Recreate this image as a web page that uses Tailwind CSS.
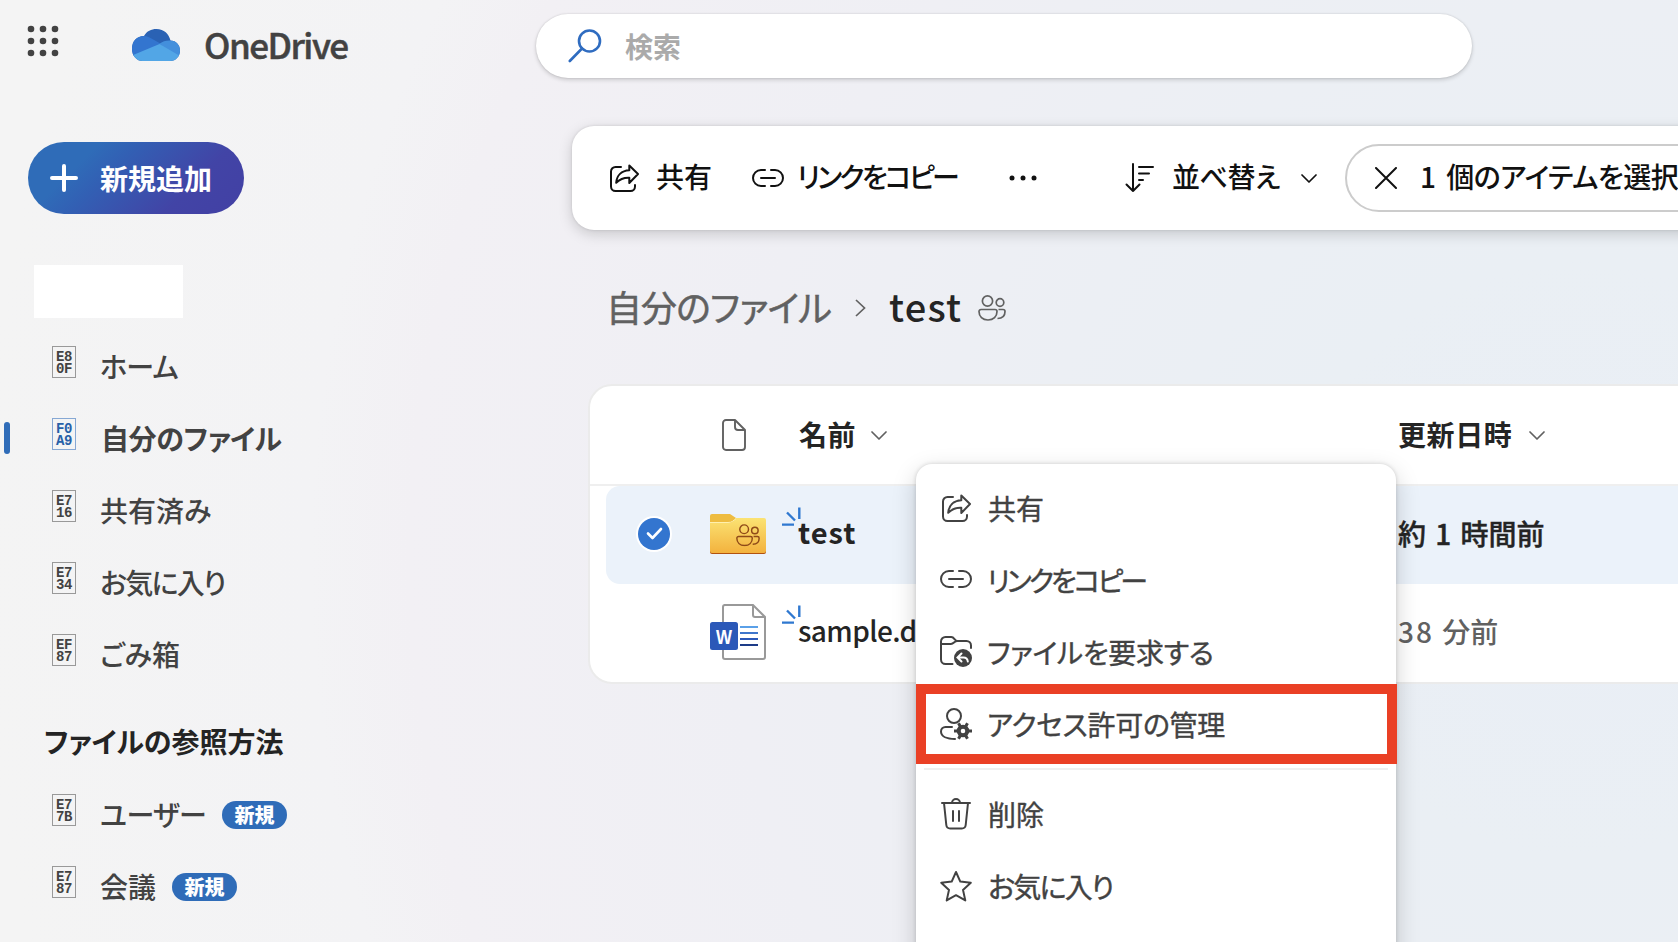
<!DOCTYPE html>
<html lang="ja">
<head>
<meta charset="utf-8">
<title>OneDrive</title>
<script src="https://cdn.jsdelivr.net/npm/@tailwindcss/browser@4"></script>
</head>
<body class="overflow-hidden">
<svg class="hidden">
  <symbol id="share" viewBox="0 0 32 32" fill="none" stroke="currentColor" stroke-width="2" stroke-linecap="round" stroke-linejoin="round"><path d="M13 5H7.500a4.500 4.500 0 0 0-4.500 4.500v15a4.500 4.500 0 0 0 4.500 4.500h15a4.500 4.500 0 0 0 4.500-4.500v-1.500"/><path d="M21.300 3.500 30 12l-8.700 9v-5.200c-6-.3-10 1.900-13.100 5C8.700 13.500 13.500 8.600 21.300 8.200z"/></symbol>
  <symbol id="link" viewBox="0 0 32 32" fill="none" stroke="currentColor" stroke-width="2" stroke-linecap="round"><path d="M13 8H9a8 8 0 0 0 0 16h4M19 8h4a8 8 0 0 1 0 16h-4M9 16h14"/></symbol>
  <symbol id="chev" viewBox="0 0 16 9" fill="none" stroke="currentColor" stroke-width="1.700" stroke-linecap="round" stroke-linejoin="round"><path d="m1 1 7 7 7-7"/></symbol>
  <symbol id="people" viewBox="0 0 28 26" fill="none" stroke="currentColor" stroke-width="1.700"><circle cx="9.500" cy="6" r="5.100"/><circle cx="22" cy="7.500" r="3.800"/><path d="M3 14.500h14a2 2 0 0 1 2 2c0 5-3.500 8.500-9 8.500s-9-3.500-9-8.500a2 2 0 0 1 2-2zM20.500 14.500H25a2 2 0 0 1 2 2c0 4-2.500 7-7.500 7"/></symbol>
  <symbol id="spark" viewBox="0 0 20 20" fill="none" stroke="#2f78d0" stroke-width="2.400"><path d="M17.300.5v11.500M5 5.500l8 8M0 17.600h12"/></symbol>
</svg>
<div class="relative flex h-[942px] w-[1678px] overflow-hidden bg-[radial-gradient(circle_at_1580px_560px,#e9eef6_0px,#eaeff4_300px,#eceff4_550px,#efeff4_850px,#f2f0f4_1170px,#f3f3f5_1270px,#f4f4f4_1600px)] font-['Noto_Sans_CJK_JP',sans-serif] text-[28px] leading-[40px] text-[#424242] [font-feature-settings:'palt']">

  <aside class="flex w-[536px] shrink-0 flex-col">
    <header class="flex h-[88px] items-start pl-[27px]">
      <svg class="mt-[25px] size-8" viewBox="0 0 32 32" fill="#424242"><circle cx="4" cy="4" r="3.300"/><circle cx="16" cy="4" r="3.300"/><circle cx="28" cy="4" r="3.300"/><circle cx="4" cy="16" r="3.300"/><circle cx="16" cy="16" r="3.300"/><circle cx="28" cy="16" r="3.300"/><circle cx="4" cy="28" r="3.300"/><circle cx="16" cy="28" r="3.300"/><circle cx="28" cy="28" r="3.300"/></svg>
      <svg class="mt-[29px] ml-[73px] h-8 w-12" viewBox="0 0 48 32"><defs><clipPath id="cl"><path d="M10.500 32A10.500 12 0 0 1 0 20C0 12 5 7 12 7 15 2 19 0 24.500 0 32 0 37 5 38.500 11.500 44 11.500 48 16 48 21.500S44 32 38 32z"/></clipPath></defs><g clip-path="url(#cl)"><path fill="#2a62b4" d="M0 0h48v32H0z"/><path fill="#3375cf" d="M0 7h12c3 0 5 1 7 2.300L31 16 0 28z"/><path fill="#438fdc" d="M27 15c4-3 8-4 12-3.500h9V30z"/><path fill="#52a6e6" d="M0 26.500 27.500 15 48 27v5H0z"/></g></svg>
      <span class="mt-[21px] ml-[24px] text-[35px] leading-[46px] font-medium tracking-[-1.500px] [-webkit-text-stroke:0.5px]">OneDrive</span>
    </header>
    <button class="mt-[54px] ml-7 flex h-[72px] w-[216px] shrink-0 items-center rounded-full bg-[linear-gradient(135deg,#2f6cb8_0%,#2f6cb8_25%,#3260b4_38%,#4244a6_72%,#4240a4_100%)] pl-[22px] font-bold text-white">
      <svg class="size-7" viewBox="0 0 28 28" stroke="#fff" stroke-width="4" stroke-linecap="round"><path d="M14 2v24M2 14h24"/></svg>
      <span class="ml-[22px]">新規追加</span>
    </button>
    <div class="mt-[51px] ml-[34px] h-[53px] w-[149px] shrink-0 bg-white"></div>
    <nav class="mt-[8px] flex flex-col font-medium">
      <a class="flex h-[72px] items-center pl-[52px]"><span class="flex h-8 w-6 shrink-0 flex-col items-center justify-center border border-[#999] pt-px font-['Liberation_Mono',monospace] text-[14px] leading-[12px] font-bold tracking-[-0.400px]"><span>E8</span><span>0F</span></span><span class="mt-[7px] ml-6 tracking-[-0.7px]">ホーム</span></a>
      <a class="flex h-[72px] items-center pl-1 font-bold"><span class="h-8 w-1.5 translate-y-1 rounded-full bg-[#2f6cb8]"></span><span class="ml-[42px] flex h-8 w-6 shrink-0 flex-col items-center justify-center border border-[#86a8d4] pt-px font-['Liberation_Mono',monospace] text-[14px] leading-[12px] font-bold tracking-[-0.400px] text-[#2860a8]"><span>F0</span><span>A9</span></span><span class="mt-[7px] ml-[25px] tracking-[-0.400px]">自分のファイル</span></a>
      <a class="flex h-[72px] items-center pl-[52px]"><span class="flex h-8 w-6 shrink-0 flex-col items-center justify-center border border-[#999] pt-px font-['Liberation_Mono',monospace] text-[14px] leading-[12px] font-bold tracking-[-0.400px]"><span>E7</span><span>16</span></span><span class="mt-[7px] ml-6">共有済み</span></a>
      <a class="flex h-[72px] items-center pl-[52px]"><span class="flex h-8 w-6 shrink-0 flex-col items-center justify-center border border-[#999] pt-px font-['Liberation_Mono',monospace] text-[14px] leading-[12px] font-bold tracking-[-0.400px]"><span>E7</span><span>34</span></span><span class="mt-[7px] ml-6 tracking-[-1.700px]">お気に入り</span></a>
      <a class="flex h-[72px] items-center pl-[52px]"><span class="flex h-8 w-6 shrink-0 flex-col items-center justify-center border border-[#999] pt-px font-['Liberation_Mono',monospace] text-[14px] leading-[12px] font-bold tracking-[-0.400px]"><span>EF</span><span>87</span></span><span class="mt-[7px] ml-6">ごみ箱</span></a>
      <h2 class="flex h-[88px] items-center pt-[22px] pl-[44px] font-bold text-[#242424]">ファイルの参照方法</h2>
      <a class="flex h-[72px] items-center pl-[52px]"><span class="flex h-8 w-6 shrink-0 flex-col items-center justify-center border border-[#999] pt-px font-['Liberation_Mono',monospace] text-[14px] leading-[12px] font-bold tracking-[-0.400px]"><span>E7</span><span>7B</span></span><span class="mt-[7px] ml-6 tracking-[-0.7px]">ユーザー</span><span class="mt-[10px] ml-4 h-7 w-[65px] rounded-full bg-[#2f6cb8] text-center text-[20px] leading-[27px] font-black text-white">新規</span></a>
      <a class="flex h-[72px] items-center pl-[52px]"><span class="flex h-8 w-6 shrink-0 flex-col items-center justify-center border border-[#999] pt-px font-['Liberation_Mono',monospace] text-[14px] leading-[12px] font-bold tracking-[-0.400px]"><span>E7</span><span>87</span></span><span class="mt-[7px] ml-6">会議</span><span class="mt-[10px] ml-4 h-7 w-[65px] rounded-full bg-[#2f6cb8] text-center text-[20px] leading-[27px] font-black text-white">新規</span></a>
    </nav>
  </aside>

  <main class="flex w-[1142px] shrink-0 flex-col">
    <div class="mt-[14px] flex h-16 w-[936px] shrink-0 items-center rounded-full bg-white pl-8 shadow-[0_2px_4px_rgba(0,0,0,0.16),0_0_2px_rgba(0,0,0,0.14)]">
      <svg class="size-[34px]" viewBox="0 0 34 34" fill="none" stroke="#2f6cc0" stroke-width="2.600" stroke-linecap="round"><circle cx="21.500" cy="12" r="10.500"/><path d="M14 19.500 1.800 32"/></svg>
      <span class="ml-[23px] font-bold text-[#aaa]">検索</span>
    </div>
    <div class="mt-12 ml-9 flex h-[104px] w-[1300px] shrink-0 items-center rounded-[22px] bg-white pl-9 font-medium text-[#111] shadow-[0_4px_14px_rgba(0,0,0,0.17),0_0_3px_rgba(0,0,0,0.12)]">
      <svg class="size-8"><use href="#share"/></svg>
      <span class="-mt-[4px] ml-[16px] w-[96px]">共有</span>
      <svg class="size-8"><use href="#link"/></svg>
      <span class="-mt-[4px] ml-[13px] w-[212px] tracking-[-2.700px]">リンクをコピー</span>
      <svg class="h-2 w-7" viewBox="0 0 28 8" fill="#111"><circle cx="3" cy="4" r="2.500"/><circle cx="14" cy="4" r="2.500"/><circle cx="25" cy="4" r="2.500"/></svg>
      <svg class="ml-[88px] size-[30px]" viewBox="0 0 30 30" fill="none" stroke="#111" stroke-width="2" stroke-linecap="round" stroke-linejoin="round"><path d="M8 1v27M1.500 21.500 8 28l6.500-6.500M14 4h14M14 10.500h10M14 17h4"/></svg>
      <span class="-mt-[4px] ml-[17px] w-[129px] tracking-[-0.5px]">並べ替え</span>
      <svg class="h-[9px] w-4"><use href="#chev"/></svg>
      <div class="ml-7 flex h-[68px] w-[400px] shrink-0 items-center rounded-full border-2 border-[#ccc] pl-7">
        <svg class="size-[22px]" viewBox="0 0 22 22" stroke="#111" stroke-width="2" stroke-linecap="round"><path d="m1 1 20 20M21 1 1 21"/></svg>
        <span class="-mt-[4px] ml-[23px] whitespace-nowrap tracking-[-0.500px] [word-spacing:5px]">1 個のアイテムを選択</span>
      </div>
    </div>
    <div class="mt-[50px] ml-[70px] flex h-14 shrink-0 items-center text-[36px] leading-[52px]">
      <span class="-mt-[5px] tracking-[-0.9px] text-[#616161] [-webkit-text-stroke:0.5px]">自分のファイル</span>
      <svg class="ml-6 h-[18px] w-[11px]" viewBox="0 0 11 18" fill="none" stroke="#616161" stroke-width="1.700"><path d="m1 1 8.500 8L1 17"/></svg>
      <span class="-mt-[5px] ml-[23px] text-[38px] font-medium tracking-[1.200px] text-[#242424]">test</span>
      <svg class="ml-[16px] h-[26px] w-7 text-[#616161]"><use href="#people"/></svg>
    </div>
    <section class="mt-12 ml-[52px] flex h-[300px] w-[1200px] shrink-0 flex-col rounded-[24px] border-2 border-[#ebebeb] bg-white font-medium text-[#242424]">
      <div class="flex h-[100px] shrink-0 items-center border-b-2 border-[#efefef] pl-[132px] font-bold">
        <svg class="h-8 w-6" viewBox="0 0 24 32" fill="none" stroke="#616161" stroke-width="1.900" stroke-linejoin="round"><path d="M4 1h9l10 10v17a3 3 0 0 1-3 3H4a3 3 0 0 1-3-3V4a3 3 0 0 1 3-3z"/><path d="M13 1v7a3 3 0 0 0 3 3h7"/></svg>
        <span class="-mt-[3px] ml-[53px] tracking-[0.5px]">名前</span>
        <svg class="ml-[15px] h-[9px] w-4 text-[#616161]"><use href="#chev"/></svg>
        <span class="-mt-[3px] ml-auto w-[131px] shrink-0 tracking-[0.600px]">更新日時</span>
        <svg class="mr-[241px] h-[9px] w-4 shrink-0 text-[#616161]"><use href="#chev"/></svg>
      </div>
      <div class="ml-4 flex h-[98px] shrink-0 items-center rounded-l-[14px] bg-[#ebf2fa] pb-0.5 pl-7">
        <svg class="size-10" viewBox="0 0 40 40"><circle cx="20" cy="20" r="18" fill="#fff"/><circle cx="20" cy="20" r="16" fill="#3375cf"/><path d="m14 19.500 4.500 4.500L27 15" fill="none" stroke="#fff" stroke-width="2.600" stroke-linecap="round" stroke-linejoin="round"/></svg>
        <svg class="ml-9 h-10 w-14" viewBox="0 0 56 40"><defs><linearGradient id="fg" x2="0" y2="1"><stop stop-color="#fbe373"/><stop offset="1" stop-color="#f3b23e"/></linearGradient></defs><path fill="#eebc40" d="M0 2a2 2 0 0 1 2-2h18l6 4v8H0z"/><path fill="#b2520e" d="M0 30h56v8a2 2 0 0 1-2 2H2a2 2 0 0 1-2-2z"/><path fill="url(#fg)" d="M0 9h18c4 0 5-1 8-5h28a2 2 0 0 1 2 2v31a2 2 0 0 1-2 2H2a2 2 0 0 1-2-2z"/><path d="M0 8.500h18c4 0 5-1.500 8-4" fill="none" stroke="#fff0ae"/><use href="#people" x="26" y="10" width="24" height="22.500" color="#8f4a18"/></svg>
        <svg class="ml-4 size-5 -translate-y-[17px]"><use href="#spark"/></svg>
        <span class="-mt-[6px] -ml-[4px] text-[29px] font-bold tracking-[1px]">test</span>
        <span class="-mt-[3px] ml-auto mr-[237px] w-[151px] shrink-0 whitespace-nowrap [word-spacing:3px] [-webkit-text-stroke:0.400px]">約 1 時間前</span>
      </div>
      <div class="flex h-[98px] shrink-0 items-center pb-0.5 pl-[120px]">
        <svg class="h-14 w-14" viewBox="0 0 56 56"><path d="M14 1h29l12 12v40a2 2 0 0 1-2 2H15a2 2 0 0 1-2-2V3a2 2 0 0 1 2-2M43 1v10a2 2 0 0 0 2 2h10" fill="#fff" stroke="#999" stroke-width="2"/><rect y="18" width="28" height="28" rx="2.500" fill="#2b58b8"/><path d="M30 23h18" stroke="#5aa0e8" stroke-width="2"/><path d="M30 29h18" stroke="#3f76cc" stroke-width="2"/><path d="M30 35h18" stroke="#2b58b8" stroke-width="2"/><path d="M30 41h18" stroke="#1d3c88" stroke-width="2"/><text x="14" y="39.500" text-anchor="middle" textLength="16" lengthAdjust="spacingAndGlyphs" fill="#fff" font-family="Liberation Sans" font-weight="700" font-size="20">W</text></svg>
        <svg class="ml-4 size-5 -translate-y-[17px]"><use href="#spark"/></svg>
        <span class="-mt-[4px] -ml-[4px] tracking-[-0.600px]">sample.docx</span>
        <span class="-mt-[3px] ml-auto mr-[237px] w-[151px] shrink-0 font-medium text-[#616161]"><span class="mr-0.5 tracking-[2px]">38</span> 分前</span>
      </div>
    </section>
  </main>

  <div class="absolute top-[464px] left-[916px] flex h-[520px] w-[480px] flex-col rounded-[16px] bg-white pt-2 font-normal shadow-[0_8px_24px_rgba(0,0,0,0.18),0_0_4px_rgba(0,0,0,0.16)] [-webkit-text-stroke:0.4px]">
    <div class="flex h-[72px] items-center pl-6"><svg class="size-8"><use href="#share"/></svg><span class="ml-[16px]">共有</span></div>
    <div class="flex h-[72px] items-center pl-6"><svg class="size-8 -translate-y-px"><use href="#link"/></svg><span class="ml-[15px] tracking-[-3px]">リンクをコピー</span></div>
    <div class="flex h-[72px] items-center pl-6"><svg class="size-8" viewBox="0 0 32 32" fill="none" stroke="#424242" stroke-width="2" stroke-linecap="round"><path d="M12.500 28H5.500A4.500 4.500 0 0 1 1 23.500v-18A4.500 4.500 0 0 1 5.500 1h5.800C14.500 1 14.500 5 17.500 5h9A4.500 4.500 0 0 1 31 9.500V12M1 8h10c3 0 3-3 6.500-3"/><circle cx="23" cy="22" r="9" fill="#424242" stroke="none"/><path d="m21.500 17.500-4 4 4 4M18 21.500h5.500c2.500 0 4 1.500 4.300 4" stroke="#fff"/></svg><span class="ml-[15px] tracking-[-0.3px]">ファイルを要求する</span></div>
    <div class="flex h-[72px] items-center pl-6"><svg class="size-8" viewBox="0 0 32 32" fill="none" stroke="#424242" stroke-width="2" stroke-linecap="round"><circle cx="14" cy="8" r="7"/><path d="M12 19H5.500A4.500 4.500 0 0 0 1 23.500C1 28.500 7 31 15 31"/><circle cx="23" cy="23" r="4.300" stroke-width="4"/><path d="M27.500 23H32M25.300 26.900l2.200 3.900M20.700 26.900l-2.200 3.900M18.500 23H14M20.700 19.100l-2.200-3.900M25.300 19.100l2.200-3.900" stroke-width="3" stroke-linecap="butt"/></svg><span class="ml-[15px] tracking-[-0.300px]">アクセス許可の管理</span></div>
    <div class="mx-2 mt-2 mb-[8px] h-0.5 shrink-0 bg-[#efefef]"></div>
    <div class="flex h-[72px] items-center pl-6"><svg class="size-8" viewBox="0 0 32 32" fill="none" stroke="#424242" stroke-width="2" stroke-linecap="round"><path d="M2 5h28M12 5a4 4 0 0 1 8 0M4 5l2.300 22a4 4 0 0 0 4 3.500h11.400a4 4 0 0 0 4-3.500L28 5M13 13v10M19 13v10"/></svg><span class="ml-[16px]">削除</span></div>
    <div class="flex h-[72px] items-center pl-6"><svg class="size-8" viewBox="0 0 32 32" fill="none" stroke="#424242" stroke-width="2" stroke-linejoin="round"><path d="m16 2 4.300 9.600 10.500 1.200-7.800 7.100 2.300 10.500L16 25.200l-9.300 5.200L9 19.900 1.200 12.800l10.500-1.200z"/></svg><span class="ml-[16px] tracking-[-1.700px]">お気に入り</span></div>
  </div>
  <div class="absolute top-[684px] left-[916px] h-20 w-[481px] border-[10px] border-[#ea4025]"></div>
</div>
</body>
</html>
